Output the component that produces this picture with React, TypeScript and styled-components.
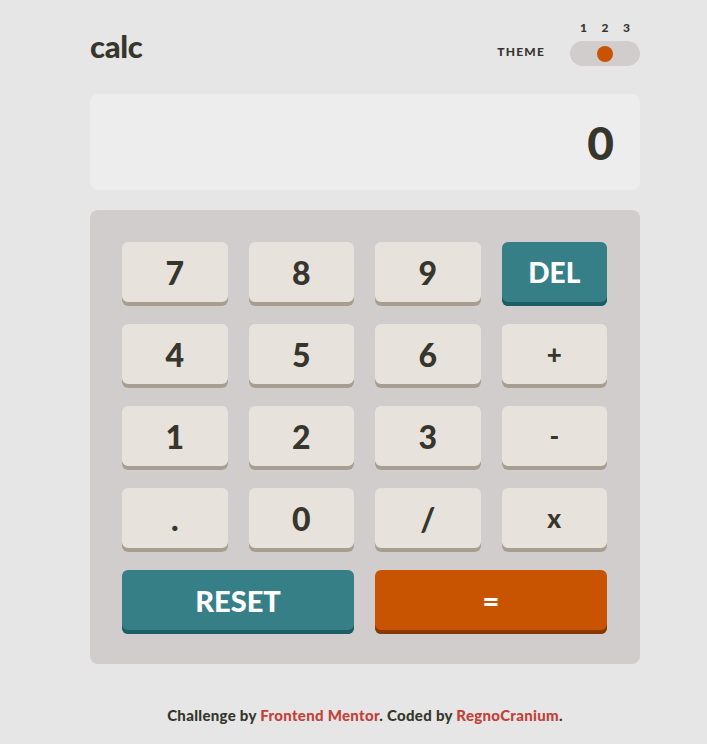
import styled, { createGlobalStyle } from "styled-components";

const GlobalStyle = createGlobalStyle`
  html, body {
    margin: 0;
    padding: 0;
    background: #e6e6e6;
  }
  body {
    font-family: "Lato", "Liberation Sans", sans-serif;
    color: #36362c;
  }
`;

const Page = styled.main`
  width: 550px;
  margin: 0 0 0 90px;
  padding-top: 18px;
`;

const Header = styled.header`
  display: flex;
  justify-content: space-between;
  align-items: flex-end;
  height: 48px;
`;

const Logo = styled.h1`
  margin: 0 0 4px;
  font-size: 31px;
  font-weight: 900;
  line-height: 1;
  letter-spacing: -0.3px;
`;

const ThemeGroup = styled.div`
  display: flex;
  align-items: flex-end;
  gap: 25px;
`;

const ThemeLabel = styled.span`
  font-size: 12px;
  font-weight: 900;
  letter-spacing: 1.2px;
  margin-bottom: 7px;
`;

const Switch = styled.div`
  display: flex;
  flex-direction: column;
  gap: 6px;
  width: 70px;
`;

const Numbers = styled.div`
  display: flex;
  justify-content: space-between;
  padding: 0 10px;
  font-size: 12px;
  font-weight: 900;
`;

const Track = styled.div`
  position: relative;
  height: 25px;
  border-radius: 13px;
  background: #d2cdcd;
`;

const Knob = styled.span<{ $pos: number }>`
  position: absolute;
  top: 4.5px;
  left: ${(p) => 5 + p.$pos * 21.5}px;
  width: 16px;
  height: 16px;
  border-radius: 50%;
  background: #c85402;
`;

const Display = styled.output`
  display: flex;
  align-items: center;
  justify-content: flex-end;
  margin-top: 28px;
  height: 96px;
  padding: 0 26px;
  border-radius: 8px;
  background: #ededed;
  font-size: 46px;
  font-weight: 900;
  box-sizing: border-box;
`;

const Keypad = styled.section`
  display: grid;
  grid-template-columns: repeat(4, 1fr);
  column-gap: 21px;
  row-gap: 18px;
  margin-top: 20px;
  padding: 32px 33px 30px 32px;
  border-radius: 8px;
  background: #d2cdcd;
`;

type Variant = "plain" | "accent" | "equals";

const colors: Record<Variant, { bg: string; shadow: string; fg: string }> = {
  plain: { bg: "#e8e2dc", shadow: "#a79e91", fg: "#36362c" },
  accent: { bg: "#377f86", shadow: "#1b5e64", fg: "#ffffff" },
  equals: { bg: "#c85402", shadow: "#873901", fg: "#ffffff" },
};

const Key = styled.button<{ $variant: Variant; $wide?: boolean; $size: number }>`
  grid-column: ${(p) => (p.$wide ? "span 2" : "auto")};
  height: 64px;
  padding: 0 0 4px;
  border: none;
  border-radius: 6px;
  background: ${(p) => colors[p.$variant].bg};
  box-shadow: inset 0 -4px 0 ${(p) => colors[p.$variant].shadow};
  color: ${(p) => colors[p.$variant].fg};
  font-family: "Lato", "Liberation Sans", sans-serif;
  font-size: ${(p) => p.$size}px;
  font-weight: 900;
  cursor: pointer;
`;

const Footer = styled.footer`
  margin-top: 42px;
  text-align: center;
  font-size: 15px;
  font-weight: 900;
  letter-spacing: 0.3px;
`;

const Link = styled.a`
  color: #c2413a;
  text-decoration: none;
`;

const keys: { label: string; variant?: Variant; size?: number }[] = [
  { label: "7" }, { label: "8" }, { label: "9" }, { label: "DEL", variant: "accent", size: 28 },
  { label: "4" }, { label: "5" }, { label: "6" }, { label: "+", size: 26 },
  { label: "1" }, { label: "2" }, { label: "3" }, { label: "-", size: 26 },
  { label: "." }, { label: "0" }, { label: "/" }, { label: "x", size: 26 },
];

export default function App() {
  return (
    <>
      <GlobalStyle />
      <Page>
        <Header>
          <Logo>calc</Logo>
          <ThemeGroup>
            <ThemeLabel>THEME</ThemeLabel>
            <Switch>
              <Numbers>
                <span>1</span>
                <span>2</span>
                <span>3</span>
              </Numbers>
              <Track>
                <Knob $pos={1} />
              </Track>
            </Switch>
          </ThemeGroup>
        </Header>
        <Display>0</Display>
        <Keypad>
          {keys.map((k) => (
            <Key key={k.label} $variant={k.variant ?? "plain"} $size={k.size ?? 32}>
              {k.label}
            </Key>
          ))}
          <Key $variant="accent" $wide $size={29}>RESET</Key>
          <Key $variant="equals" $wide $size={29}>=</Key>
        </Keypad>
        <Footer>
          Challenge by <Link href="#">Frontend Mentor</Link>. Coded by{" "}
          <Link href="#">RegnoCranium</Link>.
        </Footer>
      </Page>
    </>
  );
}
